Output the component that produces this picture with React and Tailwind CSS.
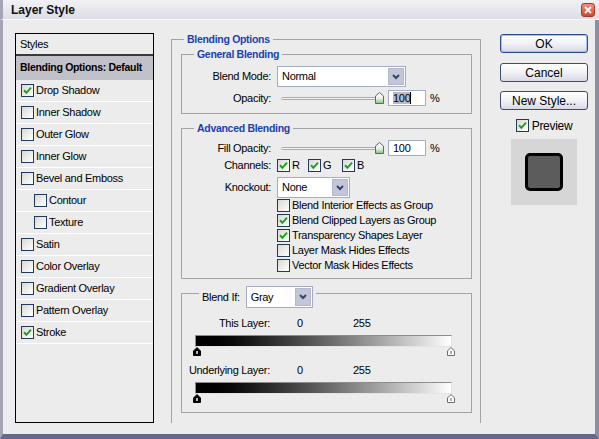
import React from "react";

// small widgets of the dialog
function Check({ checked }) {
  return (
    <span className="w-[13px] h-[13px] shrink-0 border border-[#22395a] bg-gradient-to-br from-[#d9d9d3] to-white flex items-center justify-center">
      {checked && (
        <svg width="9" height="9" viewBox="0 0 9 9">
          <path d="M1 4.2 L3.4 6.8 L8 1.6" stroke="#21a121" strokeWidth="2" fill="none" />
        </svg>
      )}
    </span>
  );
}

function Chevron() {
  return (
    <svg width="8" height="6" viewBox="0 0 8 6">
      <path d="M1 1 L4 4 L7 1" stroke="#33476b" strokeWidth="2" fill="none" />
    </svg>
  );
}

function Select({ value, className }) {
  return (
    <div className={`flex border border-[#a5acc0] bg-white ${className}`}>
      <span className="flex-1 pl-[4px] flex items-center">{value}</span>
      <span className="w-[16px] m-[1px] bg-[#c3c6d8] border border-[#b4b8cc] flex items-center justify-center">
        <Chevron />
      </span>
    </div>
  );
}

function Legend({ children, className }) {
  return (
    <div className={`-mt-[8px] h-[14px] leading-[14px] w-fit px-[3px] bg-[#ececec] font-bold text-[#1d3fae] text-[10.5px] tracking-[-0.3px] ${className}`}>
      {children}
    </div>
  );
}

function SliderThumb() {
  return (
    <svg width="9" height="12" viewBox="0 0 9 12">
      <defs>
        <linearGradient id="th" x1="0" y1="0" x2="0" y2="1">
          <stop offset="0" stopColor="#ffffff" />
          <stop offset="0.55" stopColor="#e8f0e8" />
          <stop offset="1" stopColor="#7cc47c" />
        </linearGradient>
      </defs>
      <path d="M4.5 0.5 L8.5 4 L8.5 11.5 L0.5 11.5 L0.5 4 Z" fill="url(#th)" stroke="#5d6a5d" />
    </svg>
  );
}

function Slider() {
  return (
    <div className="relative ml-[10px] w-[103px] h-[16px] flex items-center">
      <div className="w-[98px] h-[3px] rounded-full border border-[#a9a9a9] bg-[#f6f6f6]" />
      <div className="absolute right-0 top-[2px]">
        <SliderThumb />
      </div>
    </div>
  );
}

function Field({ selected }) {
  return (
    <div className="ml-[4px] w-[38px] h-[16px] border border-[#a5acc0] bg-white flex items-center pl-[4px]">
      {selected ? (
        <>
          <span className="bg-[#b6b9cc] leading-[12px]">100</span>
          <span className="w-[1px] h-[12px] bg-black" />
        </>
      ) : (
        <span>100</span>
      )}
    </div>
  );
}

function RangeThumb({ dark }) {
  return (
    <svg width="8" height="9" viewBox="0 0 8 9">
      <path
        d="M4 0.5 L7.5 4 L7.5 8.5 L0.5 8.5 L0.5 4 Z"
        fill={dark ? "#000" : "#fff"}
        stroke={dark ? "#000" : "#6d6d6d"}
      />
      {dark ? (
        <rect x="3.3" y="4" width="1.4" height="3" fill="#fff" />
      ) : (
        <rect x="3.3" y="4" width="1.4" height="3" fill="#8a8a8a" />
      )}
    </svg>
  );
}

function GrayBar() {
  return (
    <>
      <div className="mt-[5px] ml-[13px] w-[257px] h-[12px] border border-[#8c8c8c] border-r-[#e4e4e4] border-b-[#e4e4e4] bg-gradient-to-r from-black to-white" />
      <div className="ml-[11px] w-[262px] h-[9px] flex justify-between">
        <RangeThumb dark />
        <RangeThumb />
      </div>
    </>
  );
}

function StyleRow({ label, checked, indent }) {
  return (
    <div className={`h-[22px] border-b border-white flex items-center gap-[2px] ${indent ? "pl-[18px]" : "pl-[5px]"}`}>
      <Check checked={checked} />
      <span>{label}</span>
    </div>
  );
}

function Button({ children, focus }) {
  return (
    <button
      className={`w-[88px] h-[19px] rounded-[3px] border text-[12px] tracking-[0px] bg-gradient-to-b from-white via-[#f2f2f6] to-[#d6d8e6] flex items-center justify-center ${
        focus ? "border-[#2b4a94] shadow-[inset_0_0_0_1px_#a9c0ee]" : "border-[#3e4d70]"
      }`}
    >
      {children}
    </button>
  );
}

export default function App() {
  const styles = [
    { label: "Drop Shadow", checked: true },
    { label: "Inner Shadow" },
    { label: "Outer Glow" },
    { label: "Inner Glow" },
    { label: "Bevel and Emboss" },
    { label: "Contour", indent: true },
    { label: "Texture", indent: true },
    { label: "Satin" },
    { label: "Color Overlay" },
    { label: "Gradient Overlay" },
    { label: "Pattern Overlay" },
    { label: "Stroke", checked: true },
  ];

  const knockoutOpts = [
    { label: "Blend Interior Effects as Group" },
    { label: "Blend Clipped Layers as Group", checked: true },
    { label: "Transparency Shapes Layer", checked: true },
    { label: "Layer Mask Hides Effects" },
    { label: "Vector Mask Hides Effects" },
  ];

  return (
    <div className="w-[599px] h-[439px] overflow-hidden bg-[#ececec] text-black text-[11px] tracking-[-0.3px] font-['Liberation_Sans',Arial,sans-serif]">
      {/* title bar */}
      <div className="h-[20px] flex items-center justify-between pl-[8px] pr-[4px] bg-gradient-to-b from-[#f1f1f5] to-[#dddde6] border-l-[3px] border-l-[#a4a4b4] border-b border-b-[#f8f8f8]">
        <span className="font-bold text-[12px] tracking-[0px] text-[#111]">Layer Style</span>
        <span className="w-[14px] h-[14px] rounded-[3px] border border-[#a33a2a] bg-gradient-to-b from-[#f0907a] to-[#d4442a] flex items-center justify-center">
          <svg width="8" height="8" viewBox="0 0 8 8">
            <path d="M1 1 L7 7 M7 1 L1 7" stroke="#fff" strokeWidth="1.8" />
          </svg>
        </span>
      </div>

      {/* body */}
      <div className="h-[419px] flex pt-[13px] pl-[12px] border-l-[3px] border-l-[#a4a4b4] border-r-[4px] border-r-[#8c8ca4] border-b-[5px] border-b-[#67678a]">
        {/* styles list */}
        <div className="w-[139px] h-[390px] border border-black">
          <div className="h-[22px] pl-[4px] flex items-center border-b-2 border-[#3a3a3a]">Styles</div>
          <div className="h-[24px] pl-[4px] flex items-center bg-[#c1c1c9] font-bold text-[10.5px] tracking-[-0.3px]">
            Blending Options: Default
          </div>
          {styles.map((s) => (
            <StyleRow key={s.label} {...s} />
          ))}
        </div>

        {/* blending options */}
        <div className="ml-[17px] mt-[6px] w-[310px] h-[384px] border border-b-0 border-[#a3a3a3] pl-[9px] pr-[8px]">
          <Legend className="ml-[3px]">Blending Options</Legend>

          <div className="mt-[8px] w-[291px] h-[60px] border border-[#a3a3a3]">
            <Legend className="ml-[12px]">General Blending</Legend>
            <div className="mt-[5px] h-[21px] flex items-center">
              <span className="w-[89px] text-right">Blend Mode:</span>
              <Select value="Normal" className="ml-[6px] w-[129px] h-[21px]" />
            </div>
            <div className="mt-[3px] h-[16px] flex items-center">
              <span className="w-[89px] text-right">Opacity:</span>
              <Slider />
              <Field selected />
              <span className="ml-[4px]">%</span>
            </div>
          </div>

          <div className="mt-[14px] w-[291px] h-[151px] border border-[#a3a3a3]">
            <Legend className="ml-[12px]">Advanced Blending</Legend>
            <div className="mt-[5px] h-[16px] flex items-center">
              <span className="w-[89px] text-right">Fill Opacity:</span>
              <Slider />
              <Field />
              <span className="ml-[4px]">%</span>
            </div>
            <div className="mt-[3px] h-[13px] flex items-center">
              <span className="w-[89px] text-right">Channels:</span>
              <div className="ml-[6px] w-[31px] flex items-center gap-[2px]">
                <Check checked />
                <span>R</span>
              </div>
              <div className="w-[34px] flex items-center gap-[2px]">
                <Check checked />
                <span>G</span>
              </div>
              <div className="flex items-center gap-[2px]">
                <Check checked />
                <span>B</span>
              </div>
            </div>
            <div className="mt-[5px] h-[21px] flex items-center">
              <span className="w-[89px] text-right">Knockout:</span>
              <Select value="None" className="ml-[6px] w-[73px] h-[21px]" />
            </div>
            <div className="ml-[95px]">
              {knockoutOpts.map((o) => (
                <div key={o.label} className="h-[15px] flex items-center gap-[2px]">
                  <Check checked={o.checked} />
                  <span>{o.label}</span>
                </div>
              ))}
            </div>
          </div>

          <div className="mt-[14px] w-[291px] h-[120px] border border-[#a3a3a3]">
            <div className="-mt-[8px] ml-[17px] w-fit h-[22px] px-[3px] bg-[#ececec] flex items-center gap-[6px]">
              <span>Blend If:</span>
              <Select value="Gray" className="w-[67px] h-[22px]" />
            </div>
            <div className="mt-[8px] h-[14px] flex items-center">
              <span className="w-[88px] text-right">This Layer:</span>
              <span className="ml-[27px] w-[56px]">0</span>
              <span>255</span>
            </div>
            <GrayBar />
            <div className="mt-[7px] h-[14px] flex items-center">
              <span className="w-[88px] text-right">Underlying Layer:</span>
              <span className="ml-[27px] w-[56px]">0</span>
              <span>255</span>
            </div>
            <GrayBar />
          </div>
        </div>

        {/* buttons + preview */}
        <div className="ml-[19px] mt-[1px] w-[88px] flex flex-col items-center">
          <Button focus>OK</Button>
          <div className="mt-[10px]">
            <Button>Cancel</Button>
          </div>
          <div className="mt-[9px]">
            <Button>New Style...</Button>
          </div>
          <div className="mt-[9px] h-[13px] flex items-center gap-[3px]">
            <Check checked />
            <span className="text-[12px]">Preview</span>
          </div>
          <div className="mt-[7px] w-[66px] h-[66px] bg-[#d6d6d6] flex items-center justify-center">
            <div className="w-[38px] h-[38px] rounded-[5px] border-[3px] border-black bg-[#5c5c5c]" />
          </div>
        </div>
      </div>
    </div>
  );
}
